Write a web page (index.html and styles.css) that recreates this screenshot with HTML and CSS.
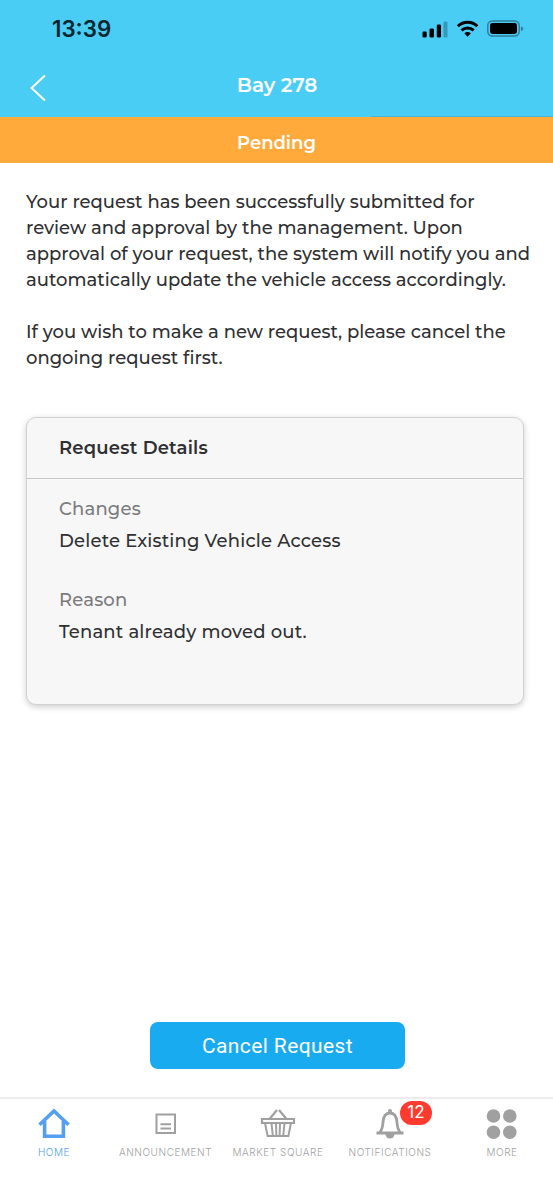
FILE: index.html
```html
<!DOCTYPE html>
<html lang="en">
<head>
    <meta charset="UTF-8">
    <meta name="viewport" content="width=device-width, initial-scale=1.0">
    <title>Bay 278</title>
    <link rel="stylesheet" href="styles.css">
</head>
<body>
    <header class="top">
        <div class="status-bar">
            <span class="time">13:39</span>
            <svg class="status-icons" width="102" height="20" viewBox="0 0 102 20">
                <!-- signal -->
                <rect x="0.5" y="12.500" width="4.2" height="6" rx="1.2"/>
                <rect x="7.5" y="9.500" width="4.4" height="9" rx="1.2"/>
                <rect x="14.8" y="5.500" width="4.2" height="13" rx="1.2"/>
                <rect x="21.5" y="2.500" width="4" height="16" rx="1.2" opacity=".25"/>
                <!-- wifi -->
                <g fill="none" stroke="#000" stroke-width="2.9">
                    <path d="M35.8 7.3a14 14 0 0 1 19.6 0"/>
                    <path d="M39.5 11.4a9 9 0 0 1 12.2 0"/>
                </g>
                <path d="M42.3 14.3q3.3-2.4 6.6 0l-3.3 3.5z"/>
                <!-- battery -->
                <rect x="65.8" y="2" width="31.4" height="15" rx="4.4" fill="none" stroke="#000" stroke-width="1.5" opacity=".38"/>
                <rect x="68" y="4" width="27" height="11" rx="2.4"/>
                <path d="M99 7.5q2.2.5 2.2 2.2T99 12z" opacity=".4"/>
            </svg>
        </div>
        <div class="nav-bar">
            <svg class="back" width="18" height="28" viewBox="0 0 18 28">
                <path d="M16 1.5 2.5 14 16 26.5"/>
            </svg>
            <h1 class="title">Bay 278</h1>
        </div>
        <div class="shade"></div>
    </header>

    <div class="status-banner">Pending</div>

    <main class="content">
        <p class="message">
            Your request has been successfully submitted for<br>
            review and approval by the management. Upon<br>
            approval of your request, the system will notify you and<br>
            automatically update the vehicle access accordingly.
        </p>
        <p class="message">
            If you wish to make a new request, please cancel the<br>
            ongoing request first.
        </p>

        <section class="card">
            <h2 class="card-title">Request Details</h2>
            <dl class="details">
                <dt>Changes</dt>
                <dd>Delete Existing Vehicle Access</dd>
                <dt>Reason</dt>
                <dd>Tenant already moved out.</dd>
            </dl>
        </section>
    </main>

    <button class="cancel-button">Cancel Request</button>

    <nav class="tab-bar">
        <a class="tab active">
            <svg width="34" height="34" viewBox="0 0 34 34" fill="none" stroke="currentColor" stroke-width="3.6">
                <path d="M2.5 17.8 17 4l14.5 13.8M7.6 14v15.3h18.8V14"/>
            </svg>
            <span>HOME</span>
        </a>
        <a class="tab">
            <svg width="34" height="34" viewBox="0 0 34 34" fill="none" stroke="currentColor" stroke-width="2">
                <path d="M7.5 7.5h18.5v18.5H7.5zM11.5 17.3h10.5M11.5 21.5h10.5"/>
            </svg>
            <span>ANNOUNCEMENT</span>
        </a>
        <a class="tab">
            <svg width="36" height="34" viewBox="0 0 36 34" fill="none" stroke="currentColor" stroke-width="2">
                <path d="m9.5 12 7.5-9M19 3l7.5 9" stroke-width="2.2"/>
                <path d="M2 12h32v4H2z" stroke-width="2.2"/>
                <path d="m5 16 2.6 13h20.8L31 16M11.5 16.500l1.3 12M16 16.500l.4 12M20 16.500l-.4 12M24.500 16.500l-1.3 12"/>
            </svg>
            <span>MARKET SQUARE</span>
        </a>
        <a class="tab">
            <svg width="34" height="34" viewBox="0 0 34 34" fill="none" stroke="currentColor" stroke-width="2.8">
                <path d="M3.500 26h27M6.5 26c3-3.5 3.200-6 3.500-10.500C10.300 10 12.500 6 17 6s6.700 4 7 9.500c.3 4.500.5 7 3.500 10.500"/>
                <circle cx="17" cy="4" r="2" fill="currentColor" stroke="none"/>
                <path d="M12.500 27h9a4.500 4.500 0 0 1-9 0z" fill="currentColor" stroke="none"/>
            </svg>
            <span>NOTIFICATIONS</span>
            <b class="badge">12</b>
        </a>
        <a class="tab">
            <svg width="34" height="34" viewBox="0 0 34 34" fill="currentColor">
                <circle cx="8.5" cy="9" r="6.8"/>
                <circle cx="24.8" cy="9" r="6.8"/>
                <circle cx="8.5" cy="25.3" r="6.8"/>
                <circle cx="24.8" cy="25.3" r="6.8"/>
            </svg>
            <span>MORE</span>
        </a>
    </nav>
</body>
</html>
```
FILE: styles.css
```css
:root {
    --header-color: #4acdf5;
    --pending-color: #ffaa3b;
    --button-color: #19abf0;
    --active-color: #559ff2;
    --text-primary: #303032;
    --text-secondary: #7c7c7e;
}

* {
    margin: 0;
    padding: 0;
    box-sizing: border-box;
}

body {
    font-family: Montserrat, Inter, sans-serif;
    background: white;
    color: var(--text-primary);
    height: 1177px;
    display: flex;
    flex-direction: column;
    overflow: hidden;
}

.top {
    background: var(--header-color);
    height: 117px;
    display: flex;
    flex-direction: column;
}

.status-bar {
    height: 58px;
    padding: 0 29px 0 52px;
    display: flex;
    align-items: center;
    justify-content: space-between;
}

.time {
    color: #082630;
    font-family: Inter, sans-serif;
    font-size: 22.3px;
    font-weight: 600;
    margin-bottom: 2px;
}

.nav-bar {
    height: 58px;
    padding-left: 29px;
    display: grid;
    grid-template-columns: 18px 1fr 46px;
    align-items: center;
    text-align: center;
}

.back {
    fill: none;
    stroke: white;
    stroke-width: 2;
    margin-top: 1px;
}

.title {
    color: white;
    font-size: 20px;
    font-weight: 600;
    line-height: 24px;
    margin-bottom: 4px;
}

.shade {
    height: 1px;
    width: 182px;
    margin-left: auto;
    background: #47b5d6;
}

.status-banner {
    background: var(--pending-color);
    color: white;
    height: 46px;
    line-height: 52px;
    text-align: center;
    font-size: 18px;
    font-weight: 600;
}

.content {
    padding: 26px 29px 0 26px;
}

.message {
    font-size: 18px;
    font-weight: 500;
    font-variant-ligatures: none;
    line-height: 26px;
    margin-bottom: 26px;
    white-space: nowrap;
}

.card {
    margin-top: 46px;
    height: 288px;
    background: #f7f7f7;
    border: 1px solid #d2d2d4;
    border-radius: 10px;
    box-shadow: 0 2px 6px rgba(0, 0, 0, 0.2);
}

.card-title {
    height: 61px;
    line-height: 60px;
    padding-left: 32px;
    border-bottom: 1px solid #c6c6c8;
    font-size: 18px;
    font-weight: 600;
    letter-spacing: 0.2px;
}

.details {
    padding: 14px 32px;
    font-size: 18px;
    font-weight: 500;
    line-height: 32px;
    letter-spacing: 0.18px;
}

.details dt {
    color: var(--text-secondary);
}

.details dd {
    margin-bottom: 27px;
}

.cancel-button {
    width: 255px;
    height: 47px;
    margin: auto 148px 28px 150px;
    background: var(--button-color);
    color: white;
    border: none;
    border-radius: 8px;
    font-family: Roboto, sans-serif;
    font-size: 21px;
    letter-spacing: 0.4px;
}

.tab-bar {
    height: 80px;
    flex: none;
    border-top: 2px solid #ececec;
    padding-top: 8px;
    display: grid;
    grid-template-columns: 108px 115px 110px 114px 110px;
}

.tab {
    position: relative;
    display: flex;
    flex-direction: column;
    align-items: center;
    color: #a0a0a0;
    font-family: Inter, sans-serif;
    font-size: 10px;
    font-weight: 300;
    line-height: 14px;
    letter-spacing: 0.55px;
    gap: 4px;
    white-space: nowrap;
}

.tab.active {
    color: var(--active-color);
}

.badge {
    position: absolute;
    left: 67px;
    top: -6px;
    width: 32px;
    height: 24px;
    border-radius: 12px;
    background: #ff3b30;
    color: white;
    text-align: center;
    font-size: 17px;
    font-weight: 400;
    line-height: 23px;
    letter-spacing: 0;
}
```
